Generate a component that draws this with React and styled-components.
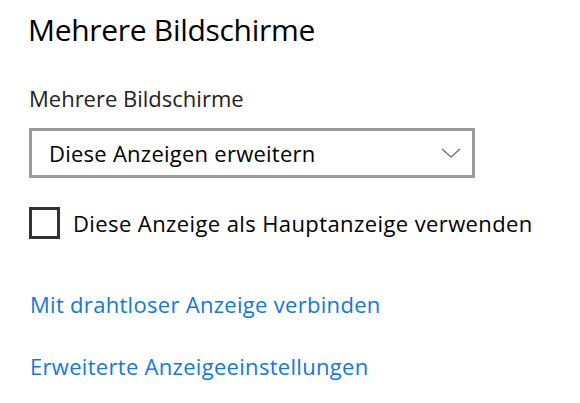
import React from 'react';
import styled, { createGlobalStyle } from 'styled-components';

const GlobalStyle = createGlobalStyle`
  body {
    margin: 0;
    background: #ffffff;
    font-family: "Open Sans", "Noto Sans", sans-serif;
  }
`;

const Page = styled.div`
  display: flex;
  flex-direction: column;
  align-items: flex-start;
  padding: 10px 0 0 28px;
`;

const Title = styled.h1`
  margin: 0;
  font-size: 30px;
  line-height: 40px;
  font-weight: 400;
  color: #000;
  letter-spacing: -0.3px;
`;

const Label = styled.div`
  margin: 33px 0 0 1px;
  font-size: 22px;
  line-height: 30px;
  color: #222;
`;

const Select = styled.div`
  margin: 15px 0 0 1px;
  box-sizing: border-box;
  width: 446px;
  height: 50px;
  border: 3px solid #9b9b9b;
  display: flex;
  align-items: center;
  justify-content: space-between;
  padding: 0 11px 0 17px;
  font-size: 22px;
  line-height: 30px;
  color: #000;
  letter-spacing: 0.25px;

  svg {
    display: block;
  }
`;

const CheckRow = styled.label`
  margin: 29px 0 0 1px;
  display: flex;
  align-items: center;
  gap: 13px;
  font-size: 22px;
  line-height: 30px;
  color: #000;
  letter-spacing: 0.4px;
`;

const Box = styled.span`
  box-sizing: border-box;
  width: 31px;
  height: 32px;
  border: 3px solid #333;
  background: #fff;
`;

const Link = styled.a`
  margin: ${p => p.$gap}px 0 0 2px;
  font-size: 22px;
  line-height: 30px;
  color: #1379d3;
  text-decoration: none;
  letter-spacing: 0.3px;
`;

export default function App() {
  return (
    <>
      <GlobalStyle />
      <Page>
        <Title>Mehrere Bildschirme</Title>
        <Label>Mehrere Bildschirme</Label>
        <Select>
          <span>Diese Anzeigen erweitern</span>
          <svg width="20" height="10" viewBox="0 0 20 10">
            <polyline points="1,1 10,9 19,1" fill="none" stroke="#777" strokeWidth="1.5" />
          </svg>
        </Select>
        <CheckRow>
          <Box />
          <span>Diese Anzeige als Hauptanzeige verwenden</span>
        </CheckRow>
        <Link href="#" $gap={50}>Mit drahtloser Anzeige verbinden</Link>
        <Link href="#" $gap={32}>Erweiterte Anzeigeeinstellungen</Link>
      </Page>
    </>
  );
}
